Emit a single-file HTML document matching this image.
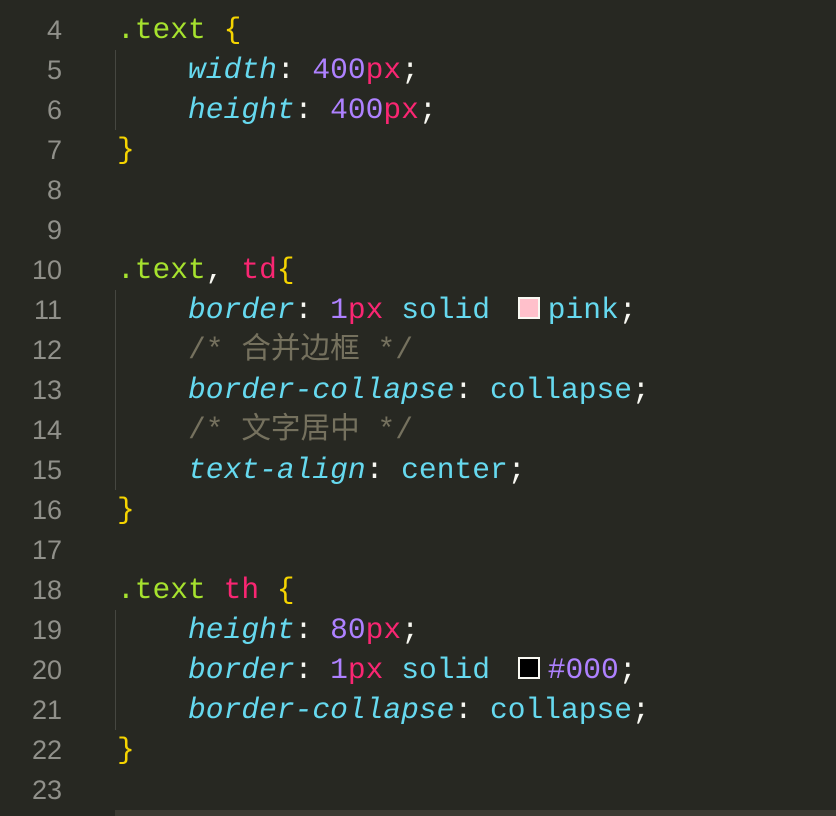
<!DOCTYPE html>
<html><head><meta charset="utf-8"><style>
body{margin:0;width:836px;height:816px;background:#272822;overflow:hidden;position:relative;font-family:"Liberation Mono","Noto Sans CJK SC",monospace;font-size:29.6px;color:#f8f8f2}
.l{position:absolute;left:0;height:40px;line-height:40px;white-space:pre;width:836px}
.n{position:absolute;right:774px;color:#90908a;font-family:"Liberation Sans","DejaVu Sans",sans-serif;font-size:27px}
.c{position:absolute;left:117px}
.s{color:#a6e22e}.t{color:#f92672}.b{color:#f5d400}.p{color:#66d9ef;font-style:italic}.v{color:#66d9ef}.m{color:#ae81ff}.k{color:#75715e}
.g{position:absolute;left:115px;width:1px;background:#464741}
.sw{display:inline-block;width:18px;height:18px;border:2px solid #f8f8f2;vertical-align:-1px;margin-left:10px;margin-right:8px}
.bar{position:absolute;left:115px;top:810px;width:721px;height:6px;background:#3b3a32}
</style></head><body>
<div class="g" style="top:50px;height:80px"></div>
<div class="g" style="top:290px;height:200px"></div>
<div class="g" style="top:610px;height:120px"></div>
<div class="l" style="top:10px"><span class="n">4</span><span class="c"><span class="s">.text</span> <span class="b">{</span></span></div>
<div class="l" style="top:50px"><span class="n">5</span><span class="c">    <span class="p">width</span>: <span class="m">400</span><span class="t">px</span>;</span></div>
<div class="l" style="top:90px"><span class="n">6</span><span class="c">    <span class="p">height</span>: <span class="m">400</span><span class="t">px</span>;</span></div>
<div class="l" style="top:130px"><span class="n">7</span><span class="c"><span class="b">}</span></span></div>
<div class="l" style="top:170px"><span class="n">8</span></div>
<div class="l" style="top:210px"><span class="n">9</span></div>
<div class="l" style="top:250px"><span class="n">10</span><span class="c"><span class="s">.text</span>, <span class="t">td</span><span class="b">{</span></span></div>
<div class="l" style="top:290px"><span class="n">11</span><span class="c">    <span class="p">border</span>: <span class="m">1</span><span class="t">px</span> <span class="v">solid</span> <span class="sw" style="background:pink"></span><span class="v">pink</span>;</span></div>
<div class="l" style="top:330px"><span class="n">12</span><span class="c">    <span class="k">/* 合并边框 */</span></span></div>
<div class="l" style="top:370px"><span class="n">13</span><span class="c">    <span class="p">border-collapse</span>: <span class="v">collapse</span>;</span></div>
<div class="l" style="top:410px"><span class="n">14</span><span class="c">    <span class="k">/* 文字居中 */</span></span></div>
<div class="l" style="top:450px"><span class="n">15</span><span class="c">    <span class="p">text-align</span>: <span class="v">center</span>;</span></div>
<div class="l" style="top:490px"><span class="n">16</span><span class="c"><span class="b">}</span></span></div>
<div class="l" style="top:530px"><span class="n">17</span></div>
<div class="l" style="top:570px"><span class="n">18</span><span class="c"><span class="s">.text</span> <span class="t">th</span> <span class="b">{</span></span></div>
<div class="l" style="top:610px"><span class="n">19</span><span class="c">    <span class="p">height</span>: <span class="m">80</span><span class="t">px</span>;</span></div>
<div class="l" style="top:650px"><span class="n">20</span><span class="c">    <span class="p">border</span>: <span class="m">1</span><span class="t">px</span> <span class="v">solid</span> <span class="sw" style="background:#000"></span><span class="m">#000</span>;</span></div>
<div class="l" style="top:690px"><span class="n">21</span><span class="c">    <span class="p">border-collapse</span>: <span class="v">collapse</span>;</span></div>
<div class="l" style="top:730px"><span class="n">22</span><span class="c"><span class="b">}</span></span></div>
<div class="l" style="top:770px"><span class="n">23</span></div>
<div class="bar"></div>
</body></html>
